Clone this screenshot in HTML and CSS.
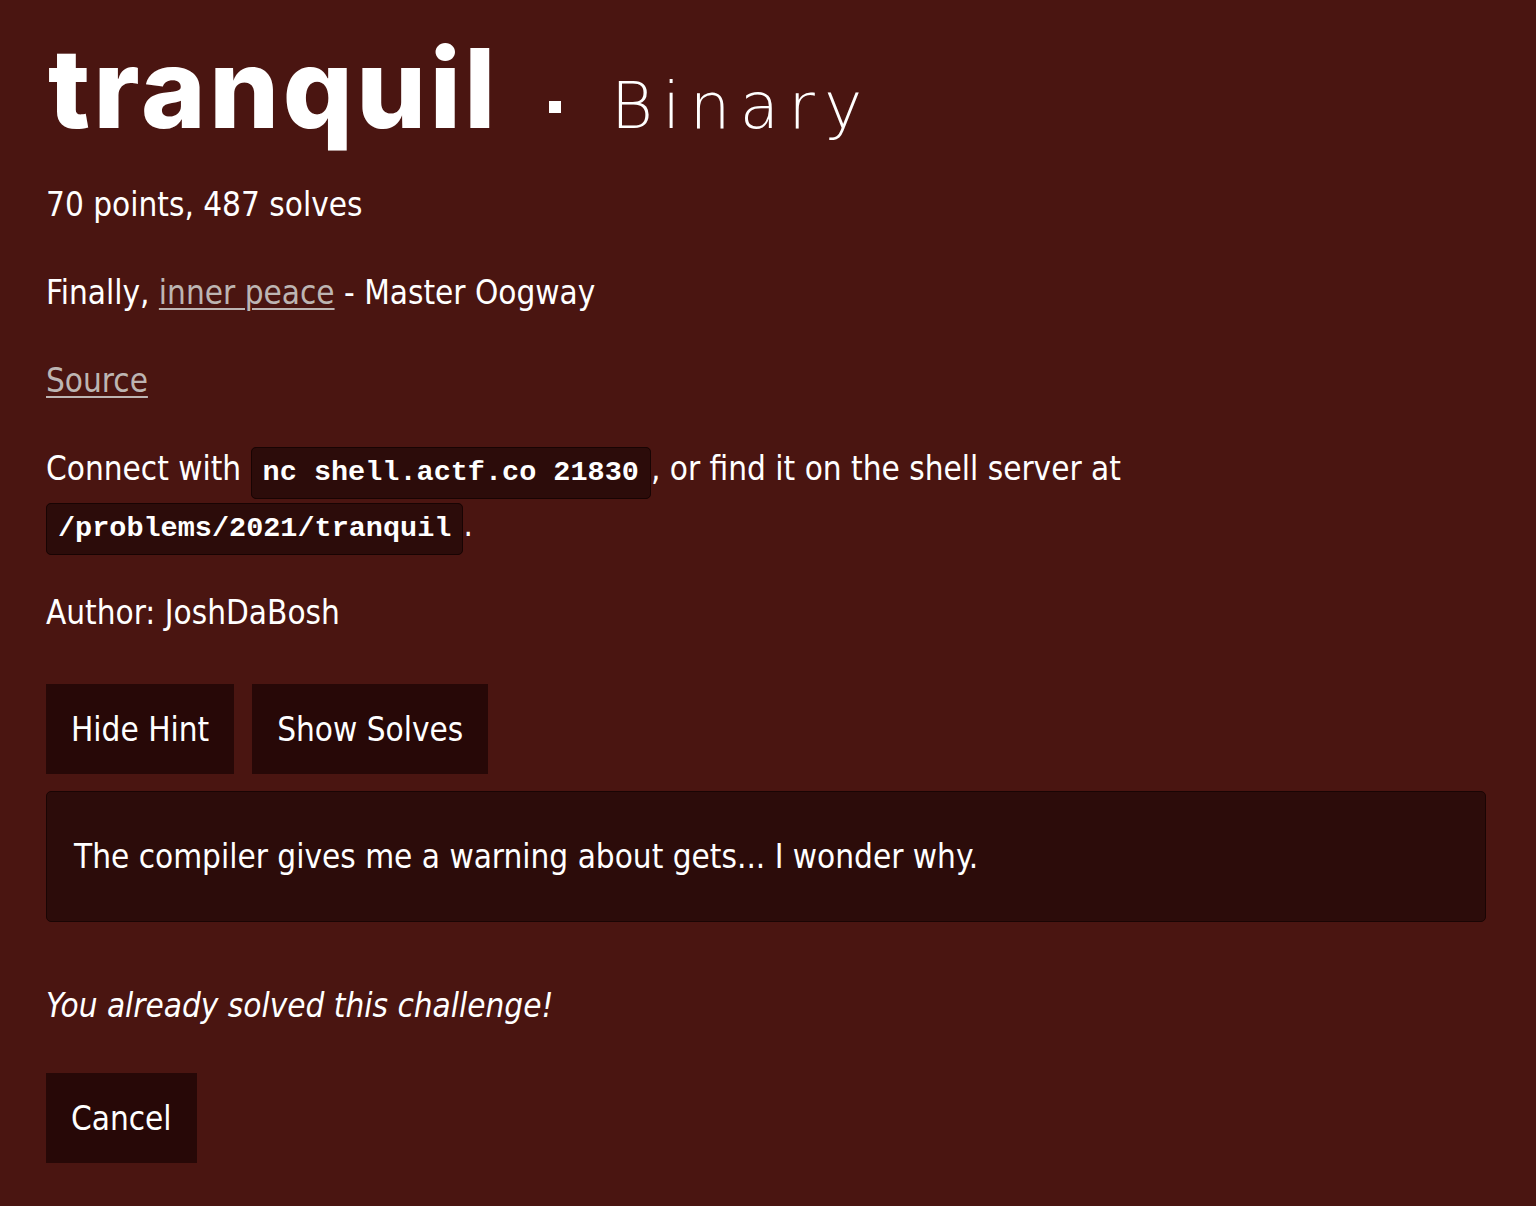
FILE: index.html
```html
<!DOCTYPE html>
<html lang="en">
<head>
<meta charset="utf-8">
<title>tranquil · Binary</title>
<link rel="stylesheet" href="styles.css">
</head>
<body>
<main class="challenge">
  <h1 class="title"><span class="name">tranquil</span><span class="sep" aria-label="·"></span><span class="category">Binary</span></h1>
  <p class="meta">70 points, 487 solves</p>
  <p>Finally, <a href="#">inner peace</a> - Master Oogway</p>
  <p><a href="#">Source</a></p>
  <p>Connect with <code>nc shell.actf.co 21830</code>, or find it on the shell server at <code>/problems/2021/tranquil</code>.</p>
  <p>Author: JoshDaBosh</p>
  <div class="actions">
    <button class="btn">Hide Hint</button>
    <button class="btn">Show Solves</button>
  </div>
  <div class="hint">The compiler gives me a warning about gets... I wonder why.</div>
  <p class="solved">You already solved this challenge!</p>
  <button class="btn">Cancel</button>
</main>
</body>
</html>
```

FILE: styles.css
```css
html, body {
  margin: 0;
  padding: 0;
  background: #4a1511;
}
body {
  color: #ffffff;
  font-family: "DejaVu Sans Condensed", "Roboto", sans-serif;
  font-size: 33px;
}
.challenge {
  padding: 33px 50px 40px 46px;
}
.title {
  display: flex;
  align-items: baseline;
  margin: 0 0 16px 2px;
  line-height: 110px;
  font-weight: normal;
}
.name {
  font-family: "Inter", sans-serif;
  font-weight: 800;
  font-size: 110px;
  letter-spacing: 3.5px;
}
.sep {
  display: inline-block;
  width: 12px;
  height: 12px;
  background: #ffffff;
  margin: 0 50px 0 50px;
  position: relative;
  top: -15px;
}
.category {
  font-family: "DejaVu Sans", sans-serif;
  font-weight: 200;
  font-size: 64px;
  letter-spacing: 9.5px;
}
p {
  margin: 0 0 32px 0;
  line-height: 56px;
}
a {
  color: #bdb5b3;
  text-decoration: underline;
  text-underline-offset: 4px;
  text-decoration-thickness: 2px;
}
code {
  font-family: "Liberation Mono", monospace;
  font-weight: bold;
  font-size: 28.5px;
  line-height: 1;
  background: #2c0c0a;
  border: 1px solid #180403;
  border-radius: 5px;
  padding: 8px 11px 9px 11px;
}
.actions {
  display: flex;
  gap: 18px;
  margin-top: 43px;
}
.btn {
  display: inline-flex;
  align-items: center;
  height: 90px;
  padding: 0 25px;
  border: none;
  border-radius: 0;
  background: #270807;
  color: #ffffff;
  font-family: inherit;
  font-size: 33px;
}
.hint {
  margin-top: 17px;
  height: 129px;
  display: flex;
  align-items: center;
  padding: 0 27px;
  background: #2c0c0a;
  border: 1px solid #1a0504;
  border-radius: 5px;
  line-height: 56px;
}
.solved {
  font-style: italic;
  margin: 56px 0 39px 0;
}
```
